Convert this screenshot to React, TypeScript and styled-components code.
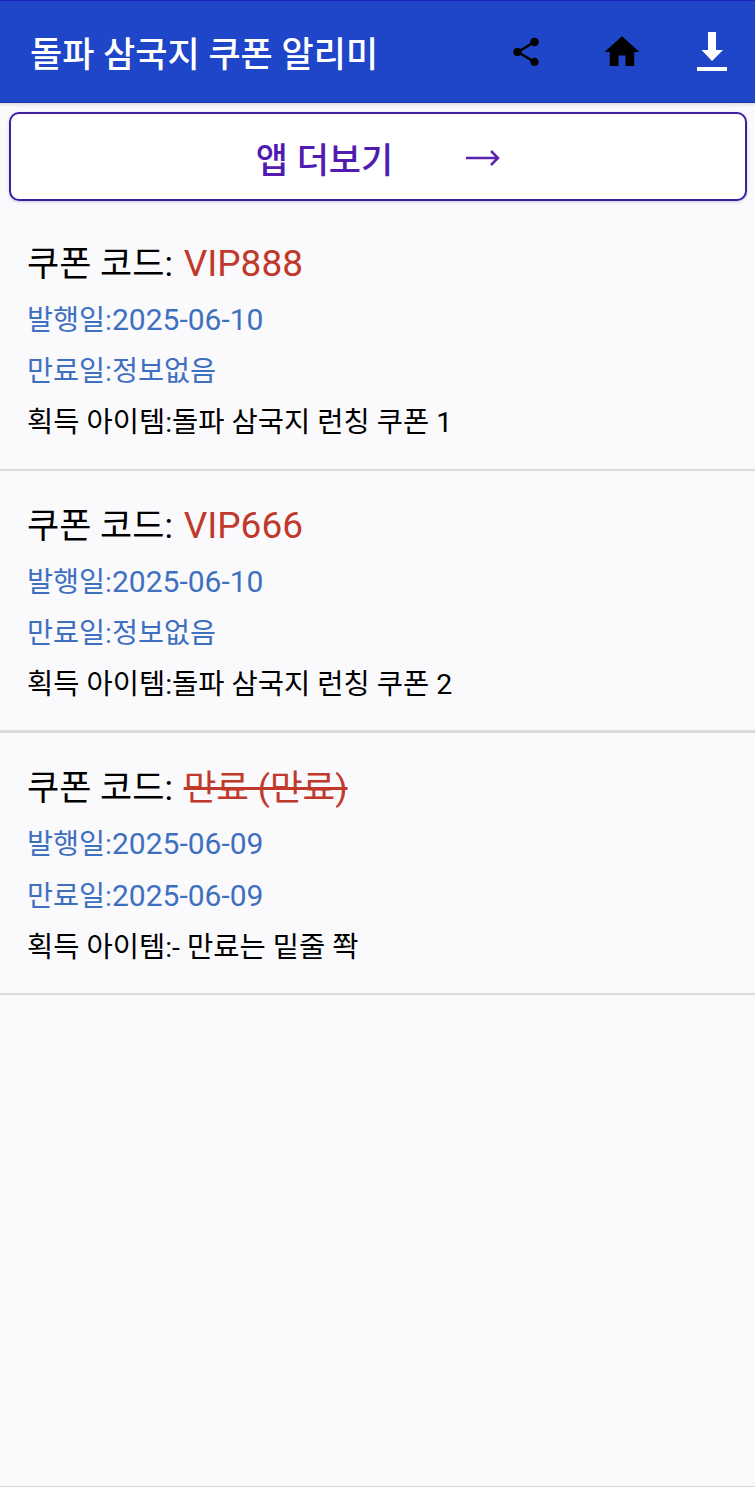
import styled, { createGlobalStyle } from "styled-components";

const coupons = [
    { code: "VIP888", issued: "2025-06-10", expires: "정보없음", item: "돌파 삼국지 런칭 쿠폰 1", expired: false },
    { code: "VIP666", issued: "2025-06-10", expires: "정보없음", item: "돌파 삼국지 런칭 쿠폰 2", expired: false },
    { code: "만료 (만료)", issued: "2025-06-09", expires: "2025-06-09", item: "- 만료는 밑줄 쫙", expired: true },
];

export default function App() {
    return (
        <Page>
            <GlobalStyle />
            <Header>
                <Title>돌파 삼국지 쿠폰 알리미</Title>
                <Actions>
                    <IconSlot $gap={54}>
                        <svg width="34" height="34" viewBox="0 0 24 24" fill="#000">
                            <path d="M18 16.08c-.76 0-1.44.3-1.96.77L8.91 12.7c.05-.23.09-.46.09-.7s-.04-.47-.09-.7l7.05-4.11c.54.5 1.25.81 2.04.81 1.66 0 3-1.34 3-3s-1.34-3-3-3-3 1.34-3 3c0 .24.04.47.09.7L8.04 9.81C7.5 9.31 6.79 9 6 9c-1.66 0-3 1.34-3 3s1.34 3 3 3c.79 0 1.5-.31 2.04-.81l7.12 4.16c-.05.21-.08.43-.08.65 0 1.61 1.31 2.92 2.92 2.92s2.92-1.31 2.92-2.92-1.31-2.92-2.92-2.92z" />
                        </svg>
                    </IconSlot>
                    <IconSlot $gap={48}>
                        <svg width="42" height="42" viewBox="0 0 24 24" fill="#000">
                            <path d="M10 20v-6h4v6h5v-8h3L12 3 2 12h3v8z" />
                        </svg>
                    </IconSlot>
                    <IconSlot>
                        <svg width="42" height="42" viewBox="0 0 42 42" fill="#fff">
                            <path d="M17 1h8v18h7L21 30 10.5 19H17zM6 36h30v4H6z" />
                        </svg>
                    </IconSlot>
                </Actions>
            </Header>
            <MoreButton>
                <MoreLabel>앱 더보기</MoreLabel>
                <svg width="36" height="20" viewBox="0 0 36 20" fill="none" stroke="#5a23b0" strokeWidth="2.5">
                    <path d="M1 10h32M26 3l7 7-7 7" />
                </svg>
            </MoreButton>
            <CouponList>
                {coupons.map((coupon, index) => (
                    <Coupon key={coupon.code} $thick={index === 1}>
                        <CodeLine>
                            쿠폰 코드: <Code $expired={coupon.expired}>{coupon.code}</Code>
                        </CodeLine>
                        <DateLine>
                            발행일:<DateValue $numeric>{coupon.issued}</DateValue>
                        </DateLine>
                        <DateLine>
                            만료일:<DateValue $numeric={coupon.expired}>{coupon.expires}</DateValue>
                        </DateLine>
                        <ItemLine>획득 아이템:{coupon.item}</ItemLine>
                    </Coupon>
                ))}
            </CouponList>
        </Page>
    );
}

const GlobalStyle = createGlobalStyle`
    html, body {
        margin: 0;
        padding: 0;
        background: #fafafd;
    }
`;

const Page = styled.div`
    display: flex;
    flex-direction: column;
    width: 755px;
    height: 1487px;
    overflow: hidden;
    background: #fafafd;
    border-bottom: 1px solid #d8d8dc;
    box-sizing: border-box;
    font-family: Roboto, "Noto Sans CJK KR", sans-serif;
`;

const Header = styled.header`
    display: flex;
    align-items: center;
    justify-content: space-between;
    height: 103px;
    flex: none;
    box-sizing: border-box;
    padding: 0 22px 0 30px;
    background: #1f46c8;
    border-top: 1px solid #1a24c0;
    border-bottom: 1px solid #1a3aa8;
    box-shadow: 0 1px 4px rgba(0, 0, 0, 0.18);
`;

const Title = styled.h1`
    margin: 0;
    font-size: 35px;
    font-weight: 500;
    color: #fff;
    white-space: nowrap;
`;

const Actions = styled.div`
    display: flex;
    align-items: center;
`;

const IconSlot = styled.div<{ $gap?: number }>`
    display: flex;
    align-items: center;
    justify-content: center;
    width: 42px;
    height: 42px;
    margin-right: ${(p) => p.$gap ?? 0}px;
`;

const MoreButton = styled.div`
    display: flex;
    align-items: center;
    justify-content: center;
    gap: 72px;
    flex: none;
    height: 89px;
    margin: 9px 8px 0 9px;
    padding: 2px 0 0 1px;
    box-sizing: border-box;
    background: #fff;
    border: 2px solid #3f1fa0;
    border-radius: 10px;
    box-shadow: 0 1px 3px rgba(60, 40, 160, 0.25);
`;

const MoreLabel = styled.span`
    font-size: 35px;
    font-weight: 500;
    color: #4f1bb0;
`;

const CouponList = styled.div`
    display: flex;
    flex-direction: column;
    padding-top: 8px;
`;

const Coupon = styled.section<{ $thick: boolean }>`
    display: flex;
    flex-direction: column;
    box-sizing: border-box;
    height: 262px;
    padding: 31px 27px 0;
    border-bottom: ${(p) => (p.$thick ? 3 : 2)}px solid #dcdcde;
`;

const CodeLine = styled.div`
    font-size: 35px;
    line-height: 48px;
    margin-bottom: 5px;
    color: #000;
`;

const Code = styled.span<{ $expired: boolean }>`
    margin-left: 2px;
    font-size: ${(p) => (p.$expired ? 35.5 : 37)}px;
    color: #c0392b;
    text-decoration: ${(p) => (p.$expired ? "line-through" : "none")};
`;

const DateLine = styled.div`
    font-size: 28.3px;
    line-height: 51px;
    color: #3f70bf;
`;

const DateValue = styled.span<{ $numeric: boolean }>`
    font-size: ${(p) => (p.$numeric ? 30 : 28.3)}px;
`;

const ItemLine = styled.div`
    font-size: 28.5px;
    line-height: 51px;
    color: #000;
`;
